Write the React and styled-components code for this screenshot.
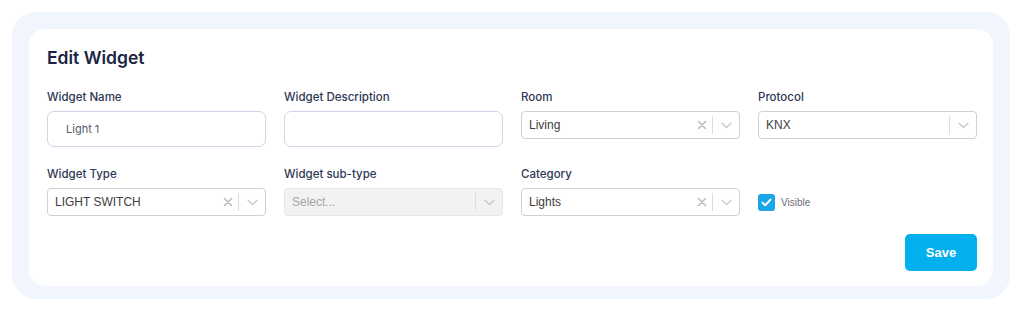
import React from "react";
import styled, { createGlobalStyle } from "styled-components";

const Global = createGlobalStyle`
  html, body { margin: 0; padding: 0; background: #ffffff; }
  body { font-family: "Inter", "Liberation Sans", sans-serif; }
  * { box-sizing: border-box; }
`;

const Page = styled.div`
  padding: 12px 14px 13px 12px;
`;

const Shell = styled.div`
  background: #f1f5fd;
  border-radius: 24px;
  padding: 17px 17px 13px 17px;
`;

const Card = styled.div`
  background: #ffffff;
  border-radius: 16px;
  padding: 18px 16px 15px 18px;
  display: flex;
  flex-direction: column;
`;

const Title = styled.h2`
  margin: 0;
  font-size: 17.5px;
  line-height: 22px;
  font-weight: 600;
  color: #1b2440;
`;

const Grid = styled.div`
  margin-top: 21px;
  display: grid;
  grid-template-columns: repeat(4, 219px);
  column-gap: 18px;
  row-gap: 20px;
  align-items: start;
`;

const Field = styled.div`
  display: flex;
  flex-direction: column;
  gap: 7px;
`;

const Label = styled.label`
  font-size: 11.5px;
  line-height: 14px;
  font-weight: 500;
  color: #2e3754;
`;

const TextBox = styled.div`
  height: 36px;
  border: 1px solid #cfd5e6;
  border-radius: 7px;
  padding: 0 18px;
  display: flex;
  align-items: center;
  font-family: "Inter", sans-serif;
  font-size: 11px;
  color: #555c6e;
`;

const SelectBox = styled.div`
  height: 28px;
  border: 1px solid #d0d0d0;
  border-radius: 4px;
  background: ${(p) => (p.$disabled ? "#f2f2f2" : "#ffffff")};
  border-color: ${(p) => (p.$disabled ? "#e6e6e6" : "#d0d0d0")};
  display: flex;
  align-items: center;
  padding-left: 7px;
  font-family: "Liberation Sans", Arial, sans-serif;
  font-size: 12px;
`;

const Value = styled.div`
  flex: 1;
  color: ${(p) => (p.$placeholder ? "#a6a6a6" : "#404040")};
`;

const Indicator = styled.div`
  width: ${(p) => p.$w}px;
  height: 100%;
  display: flex;
  align-items: center;
  justify-content: center;
`;

const Sep = styled.span`
  width: 1px;
  height: 18px;
  background: #dcdcdc;
`;

const CheckRow = styled.div`
  height: 28px;
  margin-top: 21px;
  display: flex;
  align-items: center;
  gap: 6px;
`;

const Box = styled.span`
  width: 17px;
  height: 17px;
  border-radius: 3px;
  background: #1ba6ea;
  display: flex;
  align-items: center;
  justify-content: center;
`;

const CheckText = styled.span`
  font-family: "Liberation Sans", Arial, sans-serif;
  font-size: 10px;
  color: #6b6f78;
`;

const Footer = styled.div`
  margin-top: 18px;
  display: flex;
  justify-content: flex-end;
`;

const SaveButton = styled.button`
  width: 72px;
  height: 37px;
  border: none;
  border-radius: 5px;
  background: #03b0ee;
  color: #ffffff;
  font-family: "Liberation Sans", Arial, sans-serif;
  font-size: 13px;
  font-weight: 700;
  cursor: pointer;
`;

const Cross = () => (
  <svg width="10" height="10" viewBox="0 0 10 10">
    <path d="M1.5 1.5 L8.5 8.5 M8.5 1.5 L1.5 8.5" stroke="#bdbdbd" strokeWidth="1.6" strokeLinecap="round" />
  </svg>
);

const Chevron = () => (
  <svg width="11" height="7" viewBox="0 0 11 7">
    <path d="M1 1.2 L5.5 5.5 L10 1.2" stroke="#c8c8c8" strokeWidth="1.3" fill="none" strokeLinecap="round" strokeLinejoin="round" />
  </svg>
);

const Select = ({ value, placeholder, clearable, disabled }) => (
  <SelectBox $disabled={disabled}>
    <Value $placeholder={!value}>{value || placeholder}</Value>
    {clearable && (
      <Indicator $w={20}>
        <Cross />
      </Indicator>
    )}
    <Sep />
    <Indicator $w={26}>
      <Chevron />
    </Indicator>
  </SelectBox>
);

export default function App() {
  return (
    <Page>
      <Global />
      <Shell>
        <Card>
          <Title>Edit Widget</Title>
          <Grid>
            <Field>
              <Label>Widget Name</Label>
              <TextBox>Light 1</TextBox>
            </Field>
            <Field>
              <Label>Widget Description</Label>
              <TextBox />
            </Field>
            <Field>
              <Label>Room</Label>
              <Select value="Living" clearable />
            </Field>
            <Field>
              <Label>Protocol</Label>
              <Select value="KNX" />
            </Field>
            <Field>
              <Label>Widget Type</Label>
              <Select value="LIGHT SWITCH" clearable />
            </Field>
            <Field>
              <Label>Widget sub-type</Label>
              <Select placeholder="Select..." disabled />
            </Field>
            <Field>
              <Label>Category</Label>
              <Select value="Lights" clearable />
            </Field>
            <CheckRow>
              <Box>
                <svg width="11" height="9" viewBox="0 0 11 9">
                  <path d="M1.5 4.6 L4.2 7.2 L9.5 1.6" stroke="#fff" strokeWidth="2" fill="none" strokeLinecap="round" strokeLinejoin="round" />
                </svg>
              </Box>
              <CheckText>Visible</CheckText>
            </CheckRow>
          </Grid>
          <Footer>
            <SaveButton>Save</SaveButton>
          </Footer>
        </Card>
      </Shell>
    </Page>
  );
}
